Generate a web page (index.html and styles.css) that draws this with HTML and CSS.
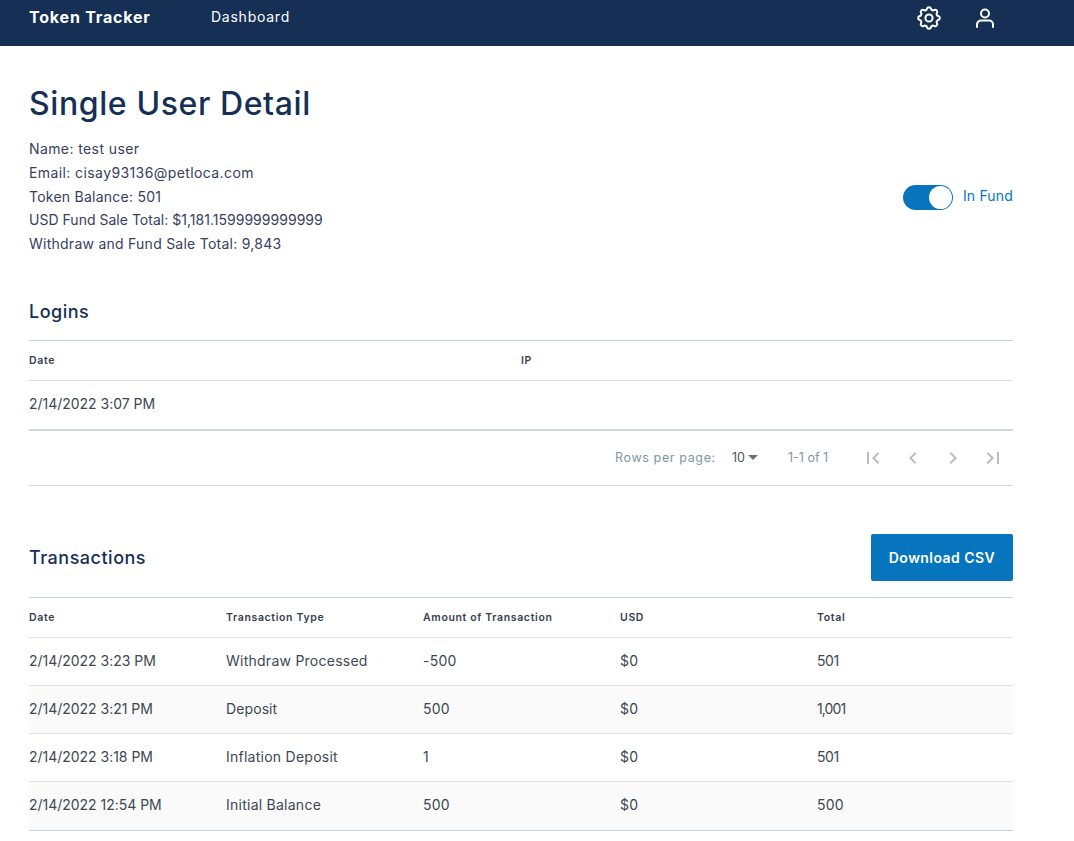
FILE: index.html
```html
<!DOCTYPE html>
<html lang="en">
<head>
<meta charset="utf-8">
<title>Single User Detail</title>
<link rel="stylesheet" href="styles.css">
</head>
<body>
<header class="topbar">
  <div class="brand">Token Tracker</div>
  <a class="nav-link">Dashboard</a>
  <div class="nav-icons">
    <svg class="nav-icon" viewBox="2 2 20 20" fill="none" stroke="currentColor" stroke-width="1.7" stroke-linecap="round" stroke-linejoin="round"><path d="M10.325 4.317c.426-1.756 2.924-1.756 3.35 0a1.724 1.724 0 0 0 2.573 1.066c1.543-.94 3.31.826 2.37 2.37a1.724 1.724 0 0 0 1.065 2.572c1.756.426 1.756 2.924 0 3.35a1.724 1.724 0 0 0-1.066 2.573c.94 1.543-.826 3.31-2.37 2.37a1.724 1.724 0 0 0-2.572 1.065c-.426 1.756-2.924 1.756-3.35 0a1.724 1.724 0 0 0-2.573-1.066c-1.543.94-3.31-.826-2.37-2.37a1.724 1.724 0 0 0-1.065-2.572c-1.756-.426-1.756-2.924 0-3.35a1.724 1.724 0 0 0 1.066-2.573c-.94-1.543.826-3.31 2.37-2.37 1 .608 2.296.07 2.572-1.065z"/><circle cx="12" cy="12" r="3"/></svg>
    <svg class="nav-icon" viewBox="0 0 24 24" fill="none" stroke="currentColor" stroke-width="2" stroke-linecap="round" stroke-linejoin="round"><circle cx="12" cy="7.500" r="4"/><path d="M4 21v-2.500a4 4 0 0 1 4-4h8a4 4 0 0 1 4 4V21"/></svg>
  </div>
</header>

<main class="page">
  <h1 class="title">Single User Detail</h1>
  <section class="summary">
    <div class="facts">
      <div>Name: test user</div>
      <div>Email: cisay93136@petloca.com</div>
      <div class="fact-snug">Token Balance: 501</div>
      <div class="fact-tight">USD Fund Sale Total: $1,181.1599999999999</div>
      <div class="fact-snug">Withdraw and Fund Sale Total: 9,843</div>
    </div>
    <label class="toggle">
      <span class="switch"><span class="knob"></span></span>
      <span class="toggle-label">In Fund</span>
    </label>
  </section>

  <h2 class="section-title logins-title">Logins</h2>
  <div class="table two-cols head-row first">
    <div>Date</div><div>IP</div>
  </div>
  <div class="table two-cols body-row last-double">
    <div class="date">2/14/2022 3:07 PM</div><div></div>
  </div>
  <div class="pagination">
    <span class="rows-label">Rows per page:</span>
    <span class="rows-select">10<svg class="caret" viewBox="0 0 10 5"><path d="M0 0h10L5 5z"/></svg></span>
    <span class="range">1-1 of 1</span>
    <span class="pager">
      <svg viewBox="0 0 24 24"><path d="M18.410 16.590 13.820 12l4.590-4.590L17 6l-6 6 6 6zM6 6h2v12H6z"/></svg>
      <svg viewBox="0 0 24 24"><path d="M15.410 7.410 14 6l-6 6 6 6 1.410-1.410L10.830 12z"/></svg>
      <svg viewBox="0 0 24 24"><path d="M10 6 8.590 7.410 13.170 12l-4.580 4.590L10 18l6-6z"/></svg>
      <svg viewBox="0 0 24 24"><path d="M5.590 7.410 10.180 12l-4.590 4.590L7 18l6-6-6-6zM16 6h2v12h-2z"/></svg>
    </span>
  </div>

  <div class="tx-head">
    <h2 class="section-title">Transactions</h2>
    <button class="csv">Download CSV</button>
  </div>
  <div class="table five-cols head-row first">
    <div>Date</div><div>Transaction Type</div><div>Amount of Transaction</div><div>USD</div><div>Total</div>
  </div>
  <div class="table five-cols body-row">
    <div class="date">2/14/2022 3:23 PM</div><div>Withdraw Processed</div><div>-500</div><div>$0</div><div class="narrow">501</div>
  </div>
  <div class="table five-cols body-row alt">
    <div class="date">2/14/2022 3:21 PM</div><div class="plain">Deposit</div><div>500</div><div>$0</div><div class="narrower">1,001</div>
  </div>
  <div class="table five-cols body-row">
    <div class="date">2/14/2022 3:18 PM</div><div>Inflation Deposit</div><div>1</div><div>$0</div><div class="narrow">501</div>
  </div>
  <div class="table five-cols body-row alt end">
    <div class="date">2/14/2022 12:54 PM</div><div>Initial Balance</div><div>500</div><div>$0</div><div>500</div>
  </div>
</main>
</body>
</html>
```
FILE: styles.css
```css
* { box-sizing: border-box; }
html, body { margin: 0; background: #fff; }
body {
  font-family: "Inter", "Liberation Sans", sans-serif;
  color: #344050;
  height: 841px;
  overflow: hidden;
}
.topbar {
  height: 46px;
  background: #152f55;
  color: #fff;
  display: flex;
  align-items: flex-start;
  padding: 0 61px 0 29px;
}
.brand {
  font-size: 16px;
  font-weight: 700;
  line-height: 34px;
  letter-spacing: 0.8px;
  width: 182px;
}
.nav-link { font-size: 14px; line-height: 34px; letter-spacing: 0.75px; }
.nav-icons {
  margin-left: auto;
  display: flex;
  gap: 32px;
  padding: 6px 16px 0 0;
}
.nav-icon { width: 24px; height: 24px; display: block; }
.page { padding: 0 61px 0 29px; }
.title {
  margin: 0;
  padding-top: 38px;
  font-size: 32px;
  line-height: 40px;
  font-weight: 500;
  color: #152f55;
  letter-spacing: 0.6px;
}
.summary {
  display: flex;
  align-items: center;
  justify-content: space-between;
  margin-top: 13px;
}
.facts {
  font-size: 14px;
  line-height: 23.8px;
  color: #38405e;
  letter-spacing: 0.4px;
}
.fact-snug { letter-spacing: 0.25px; }
.fact-tight { letter-spacing: 0.02px; }
.toggle { display: flex; align-items: center; gap: 10px; }
.switch {
  width: 50px;
  height: 25px;
  border-radius: 13px;
  background: #0675bd;
  display: block;
  padding: 1px;
  margin-top: 2px;
}
.knob {
  display: block;
  width: 23px;
  height: 23px;
  border-radius: 50%;
  background: #fff;
  margin-left: 25px;
}
.toggle-label { color: #0675bd; font-size: 14px; letter-spacing: 0.17px; margin-bottom: 2px; }
.section-title {
  margin: 0;
  font-size: 18px;
  line-height: 27px;
  font-weight: 500;
  color: #152f55;
  letter-spacing: 0.5px;
}
.logins-title { margin-top: 42px; margin-bottom: 15px; }
.table { display: grid; align-items: center; }
.two-cols { grid-template-columns: 492px 492px; }
.five-cols { grid-template-columns: repeat(5, 197px); }
.head-row {
  height: 41px;
  font-size: 10.5px;
  font-weight: 600;
  color: #344050;
  border-bottom: 1px solid #dde2e6;
  letter-spacing: 0.65px;
}
.first { border-top: 1px solid #c4d2dc; }
.body-row {
  height: 48px;
  padding-bottom: 2px;
  font-size: 14px;
  color: #3d4852;
  border-bottom: 1px solid #dde2e6;
  letter-spacing: 0.25px;
}
.date { letter-spacing: -0.02px; }
.plain { letter-spacing: 0.1px; }
.narrow { letter-spacing: -0.4px; }
.narrower { letter-spacing: -0.9px; }
.alt { background: #fafafa; }
.last-double { height: 50px; border-bottom: 2px solid #d3d9de; }
.end { height: 49px; border-bottom-color: #c4d2dc; }
.pagination {
  height: 55px;
  display: flex;
  align-items: center;
  border-bottom: 1px solid #cfd8de;
  font-size: 12.5px;
  color: #7c97a5;
  padding-left: 586px;
}
.rows-label { width: 117px; letter-spacing: 0.63px; }
.rows-select { display: flex; align-items: center; width: 56px; color: #4a5660; gap: 3px; }
.caret { width: 10px; height: 5px; fill: #707070; }
.range { width: 38px; white-space: nowrap; }
.pager { display: flex; gap: 16px; margin-left: 35px; }
.pager svg { width: 24px; height: 24px; fill: #bdbdbd; display: block; }
.tx-head {
  display: flex;
  justify-content: space-between;
  align-items: center;
  margin-top: 48px;
  margin-bottom: 16px;
}
.csv {
  width: 142px;
  height: 47px;
  border: 0;
  border-radius: 2px;
  background: #0675bd;
  color: #fff;
  font: 600 14px "Inter", "Liberation Sans", sans-serif;
  letter-spacing: 0.45px;
}
```
